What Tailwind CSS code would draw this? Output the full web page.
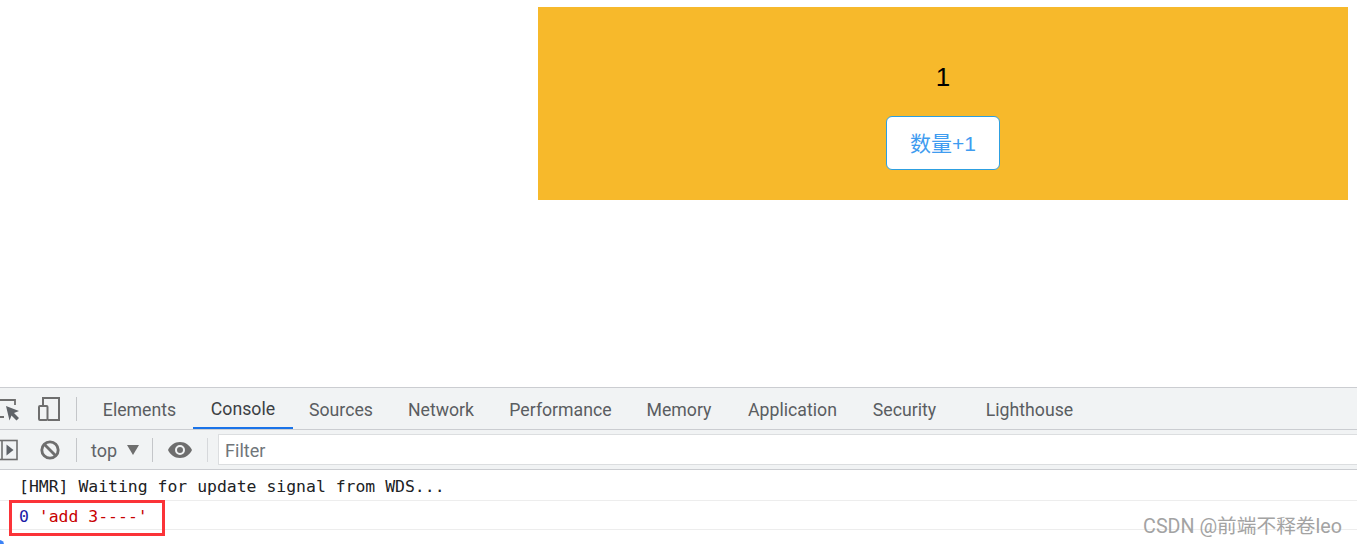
<!DOCTYPE html>
<html lang="zh-CN">
<head>
    <meta charset="UTF-8">
    <title>Console</title>
    <script src="https://cdn.jsdelivr.net/npm/@tailwindcss/browser@4"></script>
</head>
<body class="bg-white overflow-hidden font-['Roboto','Noto_Sans_CJK_SC',sans-serif]">
    <div class="relative w-[1357px] h-[544px] overflow-hidden flex flex-col">
        <!-- Page -->
        <div class="h-[387px] shrink-0 flex justify-end items-start pt-[7px] pr-[9px]">
            <div class="w-[810px] h-[193px] bg-[#f7b92b] flex flex-col items-center">
                <div class="mt-[55px] h-[30px] leading-[30px] text-[26px] text-black font-['Liberation_Sans',sans-serif]">1</div>
                <button class="mt-[24px] w-[114px] h-[54px] bg-white border border-[#2d9fe0] rounded-[6px] text-[#3f9cf0] text-[21px] leading-none font-['Liberation_Sans','Noto_Sans_CJK_SC',sans-serif]">数量+1</button>
            </div>
        </div>

        <!-- Devtools tabs -->
        <div class="h-[43px] shrink-0 bg-[#f1f3f4] border-t border-b border-[#cbcdd1] flex items-center text-[17.7px] text-[#5a5d61]">
            <svg class="-ml-[6px] w-[28px] h-[28px] shrink-0" viewBox="0 0 28 28" fill="none">
                <path d="M21 10V5H4v17h6" stroke="#6e6e6e" stroke-width="1.800"/>
                <path d="M12 11l13 5-5 2 5 5-2.500 2.500-5-5-2 5z" fill="#5f6368"/>
            </svg>
            <svg class="ml-[16px] w-[22px] h-[24px] shrink-0" viewBox="0 0 22 24" fill="none" stroke="#6e6e6e" stroke-width="2">
                <path d="M5 8V1h16v22H10"/>
                <rect x="1" y="9" width="8.500" height="14" rx="1"/>
            </svg>
            <div class="ml-[16px] mr-[9px] w-px h-[24px] bg-[#c4c6c9]"></div>
            <div class="flex h-full">
                <span class="w-[107px] pt-[3px] flex items-center justify-center">Elements</span>
                <span class="w-[100px] pt-[3px] flex items-center justify-center text-[#3c3f44] border-b-2 border-[#1a73e8]">Console</span>
                <span class="w-[96px] pt-[3px] flex items-center justify-center">Sources</span>
                <span class="w-[104px] pt-[3px] flex items-center justify-center">Network</span>
                <span class="w-[135px] pt-[3px] flex items-center justify-center">Performance</span>
                <span class="w-[102px] pt-[3px] flex items-center justify-center">Memory</span>
                <span class="w-[125px] pt-[3px] flex items-center justify-center">Application</span>
                <span class="w-[99px] pt-[3px] flex items-center justify-center">Security</span>
                <span class="ml-[14px] w-[123px] pt-[3px] flex items-center justify-center">Lighthouse</span>
            </div>
        </div>

        <!-- Console toolbar -->
        <div class="h-[40px] shrink-0 bg-[#f1f3f4] border-b border-[#cbcdd1] flex items-center text-[18px] text-[#5f6368]">
            <svg class="-ml-[4px] w-[22px] h-[22px] shrink-0" viewBox="0 0 22 22" fill="none">
                <rect x="1" y="1.500" width="20" height="19" stroke="#6e6e6e" stroke-width="1.600"/>
                <path d="M6 1.500v19" stroke="#6e6e6e" stroke-width="1.600"/>
                <path d="M10.500 5.500l7 5.500-7 5.500z" fill="#5f6368"/>
            </svg>
            <svg class="ml-[22px] w-[20px] h-[20px] shrink-0" viewBox="0 0 21 21" fill="none" stroke="#6e6e6e" stroke-width="3">
                <circle cx="10.500" cy="10.500" r="8.600"/>
                <path d="M4.500 4.500l12 12"/>
            </svg>
            <div class="ml-[16px] w-px h-[24px] bg-[#c4c6c9]"></div>
            <span class="ml-[14px] pt-[1px]">top</span>
            <svg class="ml-[10px] w-[12px] h-[10px] shrink-0" viewBox="0 0 12 10"><path d="M0 0h12L6 10z" fill="#6e6e6e"/></svg>
            <div class="ml-[13px] w-px h-[24px] bg-[#c4c6c9]"></div>
            <svg class="ml-[15px] w-[24px] h-[16px] shrink-0" viewBox="0 0 24 16">
                <path fill-rule="evenodd" d="M12 0C6.500 0 2.200 3.300 0 8c2.200 4.700 6.500 8 12 8s9.800-3.300 12-8c-2.200-4.700-6.500-8-12-8zm0 13a5 5 0 110-10 5 5 0 010 10zm0-8a3 3 0 100 6 3 3 0 000-6z" fill="#6e6e6e"/>
            </svg>
            <div class="ml-[15px] w-px h-[24px] bg-[#d6d8db]"></div>
            <div class="ml-[10px] flex-1 -mr-[4px] h-[31px] bg-white border border-[#dcdee0] flex items-center pl-[6px] pt-[1px] text-[#70757a]">Filter</div>
        </div>

        <!-- Console messages -->
        <div class="font-['DejaVu_Sans_Mono','Liberation_Mono',monospace] text-[16.45px] leading-[20px]">
            <div class="h-[31px] border-b border-[#ededed] pl-[19px] pt-[7px] text-[#202124]">[HMR] Waiting for update signal from WDS...</div>
            <div class="h-[29px] border-b border-[#ededed] pl-[19px] pt-[6px] whitespace-pre"><span class="text-[#1a1aa6]">0</span> <span class="text-[#c80000]">'add 3----'</span></div>
        </div>

        <!-- Annotation -->
        <div class="absolute left-[9px] top-[500px] w-[156px] h-[36px] border-[3px] border-[#fb3338]"></div>
        <!-- Corner of the drawer's blue icon -->
        <div class="absolute -left-[5px] top-[540px] w-[9px] h-[9px] rounded-full bg-[#3b82f6]"></div>
        <!-- Watermark -->
        <div class="absolute right-[15px] top-[514px] text-[19.7px] leading-[26px] text-[#a3a3a3]">CSDN @前端不释卷leo</div>
    </div>
</body>
</html>
